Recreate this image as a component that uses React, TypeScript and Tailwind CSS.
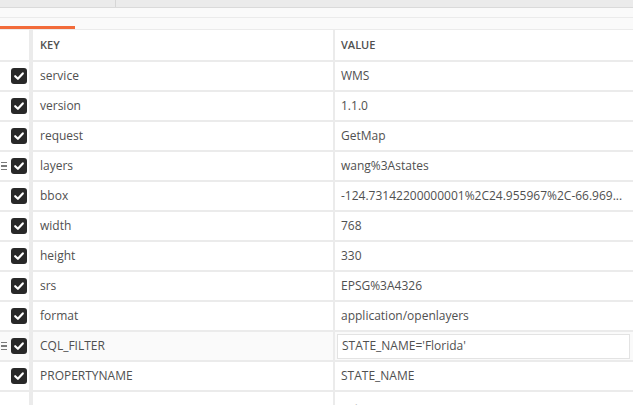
import React from "react";

type Row = { k: string; v: string; handle?: boolean; editing?: boolean };

const rows: Row[] = [
  { k: "service", v: "WMS" },
  { k: "version", v: "1.1.0" },
  { k: "request", v: "GetMap" },
  { k: "layers", v: "wang%3Astates", handle: true },
  { k: "bbox", v: "-124.73142200000001%2C24.955967%2C-66.969..." },
  { k: "width", v: "768" },
  { k: "height", v: "330" },
  { k: "srs", v: "EPSG%3A4326" },
  { k: "format", v: "application/openlayers" },
  { k: "CQL_FILTER", v: "STATE_NAME='Florida'", handle: true, editing: true },
  { k: "PROPERTYNAME", v: "STATE_NAME" },
];

function Check() {
  return (
    <div className="w-4 h-4 rounded-[3px] bg-[#282828] flex items-center justify-center">
      <svg width="12" height="12" viewBox="0 0 12 12">
        <path d="M2.2 6.2 L4.9 8.8 L9.8 3.4" fill="none" stroke="#fff" strokeWidth="2.2" strokeLinecap="round" strokeLinejoin="round" />
      </svg>
    </div>
  );
}

function Handle() {
  return (
    <div className="flex flex-col gap-[2px] w-[6px] mr-[4px]">
      <div className="h-[1.5px] bg-[#7a7a7a]" />
      <div className="h-[1.5px] bg-[#7a7a7a]" />
      <div className="h-[1.5px] bg-[#7a7a7a]" />
    </div>
  );
}

export default function App() {
  return (
    <div
      className="h-[405px] w-[633px] overflow-hidden bg-white text-[12px] text-[#505050]"
      style={{ fontFamily: '"Open Sans", "Noto Sans", sans-serif' }}
    >
      <div className="h-[8px] bg-[#ebebeb] border-b border-[#dadada] flex">
        <div className="w-[116px] border-r border-[#d6d6d6]" />
      </div>
      <div className="h-[10px] bg-[#fafafa] border-b border-[#ebebeb]" />
      <div className="h-[12px] bg-[#fafafa] border-b border-[#ebebeb] flex flex-col justify-end">
        <div className="h-[3px] w-[75px] bg-[#f26b3a]" />
      </div>

      <div className="flex h-[32px] border-b-2 border-[#ebebeb]">
        <div className="w-[33px] border-r-4 border-[#ebebeb]" />
        <div className="w-[302px] border-r-2 border-[#ebebeb] pl-[7px] flex items-center text-[11px] font-semibold">
          KEY
        </div>
        <div className="flex-1 pl-[6px] flex items-center text-[11px] font-semibold">VALUE</div>
      </div>

      {rows.map((r) => (
        <div
          key={r.k}
          className={`flex h-[30px] border-b-2 border-[#ebebeb] ${r.editing ? "bg-[#fafafa]" : "bg-white"}`}
        >
          <div className="w-[33px] border-r-4 border-[#ebebeb] flex items-center justify-end pr-[2px]">
            {r.handle && <Handle />}
            <Check />
          </div>
          <div className="w-[302px] border-r-2 border-[#ebebeb] pl-[7px] flex items-center">{r.k}</div>
          <div className="flex-1 flex items-center min-w-0">
            {r.editing ? (
              <div className="ml-[2px] mr-[3px] h-[25px] flex-1 bg-white border border-[#e3e3e3] flex items-center pl-[4px]">
                {r.v}
              </div>
            ) : (
              <span className="pl-[6px] whitespace-nowrap">{r.v}</span>
            )}
          </div>
        </div>
      ))}

      <div className="flex h-[30px]">
        <div className="w-[33px] border-r-4 border-[#ebebeb]" />
        <div className="w-[302px] border-r-2 border-[#ebebeb] pl-[7px] pt-[9px] text-[#c2c2c2]">Key</div>
        <div className="flex-1 pl-[6px] pt-[9px] text-[#c2c2c2]">Value</div>
      </div>
    </div>
  );
}
